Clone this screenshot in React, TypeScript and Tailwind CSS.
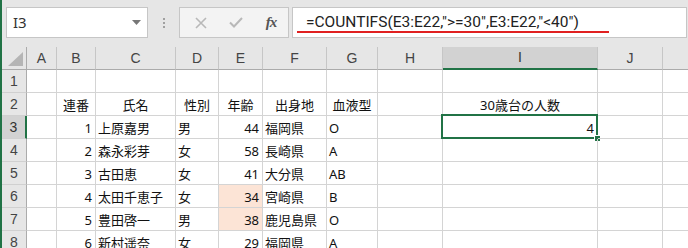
import React from 'react';

const cols = [
  { key: 'A', w: 'w-[30px]' },
  { key: 'B', w: 'w-[39px]' },
  { key: 'C', w: 'w-[80px]' },
  { key: 'D', w: 'w-[43px]' },
  { key: 'E', w: 'w-[44px]' },
  { key: 'F', w: 'w-[64px]' },
  { key: 'G', w: 'w-[51px]' },
  { key: 'H', w: 'w-[65px]' },
  { key: 'I', w: 'w-[155px]' },
  { key: 'J', w: 'w-[65px]' },
];

type Cell = { text?: string; align?: 'left' | 'right' | 'center'; fill?: boolean; selected?: boolean };

const blank: Cell = {};
const L = (text: string): Cell => ({ text, align: 'left' });
const R = (text: string, fill = false): Cell => ({ text, align: 'right', fill });
const C = (text: string): Cell => ({ text, align: 'center' });

const rows: Cell[][] = [
  [blank, blank, blank, blank, blank, blank, blank, blank, blank, blank],
  [blank, C('連番'), C('氏名'), C('性別'), C('年齢'), C('出身地'), C('血液型'), blank, C('30歳台の人数'), blank],
  [blank, R('1'), L('上原嘉男'), L('男'), R('44'), L('福岡県'), L('O'), blank, { text: '4', align: 'right', selected: true }, blank],
  [blank, R('2'), L('森永彩芽'), L('女'), R('58'), L('長崎県'), L('A'), blank, blank, blank],
  [blank, R('3'), L('古田恵'), L('女'), R('41'), L('大分県'), L('AB'), blank, blank, blank],
  [blank, R('4'), L('太田千恵子'), L('女'), R('34', true), L('宮崎県'), L('B'), blank, blank, blank],
  [blank, R('5'), L('豊田啓一'), L('男'), R('38', true), L('鹿児島県'), L('O'), blank, blank, blank],
  [blank, R('6'), L('新村遥奈'), L('女'), R('29'), L('福岡県'), L('A'), blank, blank, blank],
];

function Toolbar() {
  return (
    <div className="h-[47px] shrink-0 bg-[#e6e6e6] flex items-start pt-[7px] pl-[4px]">
      {/* name box */}
      <div className="w-[142px] h-[31px] bg-white border border-[#c6c6c6] flex items-center justify-between pl-[6px] pr-[6px]">
        <span className="text-[15px] text-[#333] font-['Noto_Sans',sans-serif]">I3</span>
        <svg width="9" height="5" viewBox="0 0 9 5">
          <path d="M0 0 L9 0 L4.5 5 Z" fill="#777" />
        </svg>
      </div>
      {/* grip */}
      <div className="w-[31px] h-[31px] flex flex-col items-center justify-center gap-[2px]">
        <div className="w-[2px] h-[2px] bg-[#a0a0a0]" />
        <div className="w-[2px] h-[2px] bg-[#a0a0a0]" />
        <div className="w-[2px] h-[2px] bg-[#a0a0a0]" />
      </div>
      {/* buttons */}
      <div className="w-[110px] h-[31px] bg-[#f3f3f3] border border-[#c6c6c6] flex items-center">
        <div className="w-[37px] flex justify-center pl-[4px]">
          <svg width="12" height="12" viewBox="0 0 12 12">
            <path d="M1 1 L11 11 M11 1 L1 11" stroke="#b8b8b8" strokeWidth="1.6" />
          </svg>
        </div>
        <div className="w-[37px] flex justify-center">
          <svg width="14" height="11" viewBox="0 0 14 11">
            <path d="M1 5.5 L5 9.5 L13 1" stroke="#b8b8b8" strokeWidth="2" fill="none" />
          </svg>
        </div>
        <div className="flex-1 flex justify-center">
          <span className="text-[15px] italic font-bold text-[#555] font-['Liberation_Serif',serif] tracking-[-1px]">fx</span>
        </div>
      </div>
      {/* formula */}
      <div className="ml-[3px] w-[395px] h-[31px] bg-white border border-[#c6c6c6] relative flex items-center pl-[13px]">
        <span className="text-[15.5px] text-[#222] font-['Roboto',sans-serif]">
          =COUNTIFS(E3:E22,"&gt;=30",E3:E22,"&lt;40")
        </span>
        <div className="absolute left-[4px] top-[23px] w-[312px] h-[2px] bg-[#e02020]" />
      </div>
    </div>
  );
}

function HeaderRow() {
  return (
    <div className="flex h-[23px] shrink-0 bg-[#e6e6e6]">
      <div className="w-[25px] h-[23px] box-border border-r border-b border-[#ababab] relative">
        <svg className="absolute left-[6px] top-[5px]" width="15" height="14" viewBox="0 0 15 14">
          <path d="M15 0 L15 14 L0 14 Z" fill="#b5b5b5" />
        </svg>
      </div>
      {cols.map((c) => (
        <div
          key={c.key}
          className={`${c.w} h-[23px] box-border shrink-0 border-r flex items-center justify-center text-[14px] font-['Liberation_Sans',sans-serif] ${
            c.key === 'I'
              ? 'bg-[#d2d2d2] border-b-2 border-b-[#217346] border-r-[#c6c6c6] text-[#333]'
              : 'border-b border-b-[#ababab] border-r-[#c6c6c6] text-[#444]'
          }`}
        >
          {c.key}
        </div>
      ))}
      <div className="flex-1 h-[23px] box-border border-b border-[#ababab]" />
    </div>
  );
}

function DataRow({ n, cells }: { n: number; cells: Cell[] }) {
  const sel = n === 3;
  return (
    <div className="flex h-[23px] shrink-0">
      <div
        className={`w-[25px] h-[23px] box-border shrink-0 border-b border-b-[#d0d0d0] flex items-center justify-center text-[14px] font-['Liberation_Sans',sans-serif] ${
          sel ? 'bg-[#d2d2d2] border-r-2 border-r-[#217346] text-[#333]' : 'bg-[#e6e6e6] border-r border-r-[#ababab] text-[#444]'
        }`}
      >
        {n}
      </div>
      {cols.map((c, i) => {
        const cell = cells[i];
        const align =
          cell.align === 'right' ? 'justify-end pr-[3px]' : cell.align === 'center' ? 'justify-center' : 'justify-start pl-[2px]';
        return (
          <div
            key={c.key}
            className={`${c.w} h-[23px] box-border shrink-0 border-r border-b border-[#d4d4d4] flex items-center relative whitespace-nowrap text-[13px] text-[#111] font-['Noto_Sans','Noto_Sans_CJK_JP',sans-serif] ${align} ${
              cell.fill ? 'bg-[#fce4d6]' : ''
            } ${i === 6 ? 'overflow-visible z-10' : ''}`}
          >
            <span className="leading-none pt-[2px]">{cell.text}</span>
            {cell.selected && (
              <>
                <div className="absolute left-[-2px] top-[-2px] right-[-1px] bottom-[-1px] border-2 border-[#217346] pointer-events-none" />
                <div className="absolute right-[-4px] bottom-[-4px] w-[7px] h-[7px] bg-[#217346] border border-white" />
              </>
            )}
          </div>
        );
      })}
      <div className="flex-1 h-[23px] box-border border-b border-[#d4d4d4]" />
    </div>
  );
}

export default function App() {
  return (
    <div className="w-[688px] h-[248px] overflow-hidden bg-white flex">
      <div className="w-[2px] shrink-0 bg-[#217346]" />
      <div className="flex-1 flex flex-col">
        <Toolbar />
        <HeaderRow />
        {rows.map((r, i) => (
          <DataRow key={i} n={i + 1} cells={r} />
        ))}
      </div>
    </div>
  );
}
